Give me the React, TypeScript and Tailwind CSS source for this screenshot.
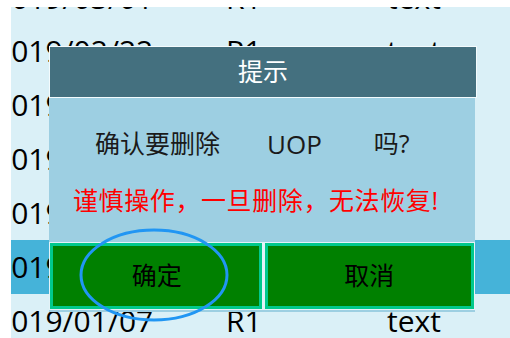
const rows = [
  { d: "2019/03/01", r: "R1", t: "text" },
  { d: "2019/02/22", r: "R1", t: "text" },
  { d: "2019/02/15", r: "R1", t: "text" },
  { d: "2019/02/08", r: "R1", t: "text" },
  { d: "2019/01/30", r: "R1", t: "text" },
  { d: "2019/01/14", r: "R1", t: "text", sel: true },
  { d: "2019/01/07", r: "R1", t: "text" },
];

export default function App() {
  return (
    <div className="relative w-[510px] h-[338px] bg-white overflow-hidden">
      {/* list behind the dialog */}
      <div className="ml-[11px] mt-[7px] h-[331px] bg-[#daf0f7] overflow-hidden" style={{ fontFamily: '"Open Sans", "Noto Sans", sans-serif' }}>
        <div className="-mt-[35px] -ml-[17px]">
          {rows.map((row, i) => (
            <div
              key={row.d}
              className={
                "grid grid-cols-[232px_161px_1fr] items-center text-[30px] leading-none text-black " +
                (i === 0 ? "h-[52px] " : "h-[54px] ") +
                (row.sel ? "bg-[#45b3d9]" : "")
              }
            >
              <span>{row.d}</span>
              <span>{row.r}</span>
              <span>{row.t}</span>
            </div>
          ))}
        </div>
      </div>

      {/* dialog */}
      <div
        className="absolute left-[49px] top-[46px] w-[428px] flex flex-col"
        style={{ fontFamily: '"Open Sans", "Noto Sans CJK SC", sans-serif' }}
      >
        <div className="h-[52px] bg-[#44707f] border border-[#f4fbfd] flex items-center justify-center text-[25px] text-white">
          提示
        </div>
        <div className="w-[426px] h-[214px] bg-[#9dcfe2] flex flex-col">
          <div className="h-[92px] flex items-center text-[25px] text-[#1a1a1a]">
            <span className="ml-[46px]">确认要删除</span>
            <span className="ml-[47px] text-[26px]">UOP</span>
            <span className="ml-[52px]">吗?</span>
          </div>
          <div className="h-[22px] flex items-center text-[25px] text-[#ff0000] pl-[24px] tracking-[0.6px]">
            谨慎操作，一旦删除，无法恢复!
          </div>
          <div className="mt-[30px] h-[68px] bg-[#e3f2f7] p-px flex gap-[3px]">
            <button className="flex-1 border-[3px] border-[#00c98c] bg-[#008000] text-[25px] text-black flex items-center justify-center pl-[2px]">
              确定
            </button>
            <button className="flex-1 border-[3px] border-[#00c98c] bg-[#008000] text-[25px] text-black flex items-center justify-center">
              取消
            </button>
          </div>
        </div>
      </div>

      {/* annotation ring */}
      <svg className="absolute left-0 top-0 pointer-events-none" width="510" height="338">
        <ellipse cx="154" cy="275" rx="73" ry="45" fill="none" stroke="#2196f3" strokeWidth="3" />
      </svg>
    </div>
  );
}
